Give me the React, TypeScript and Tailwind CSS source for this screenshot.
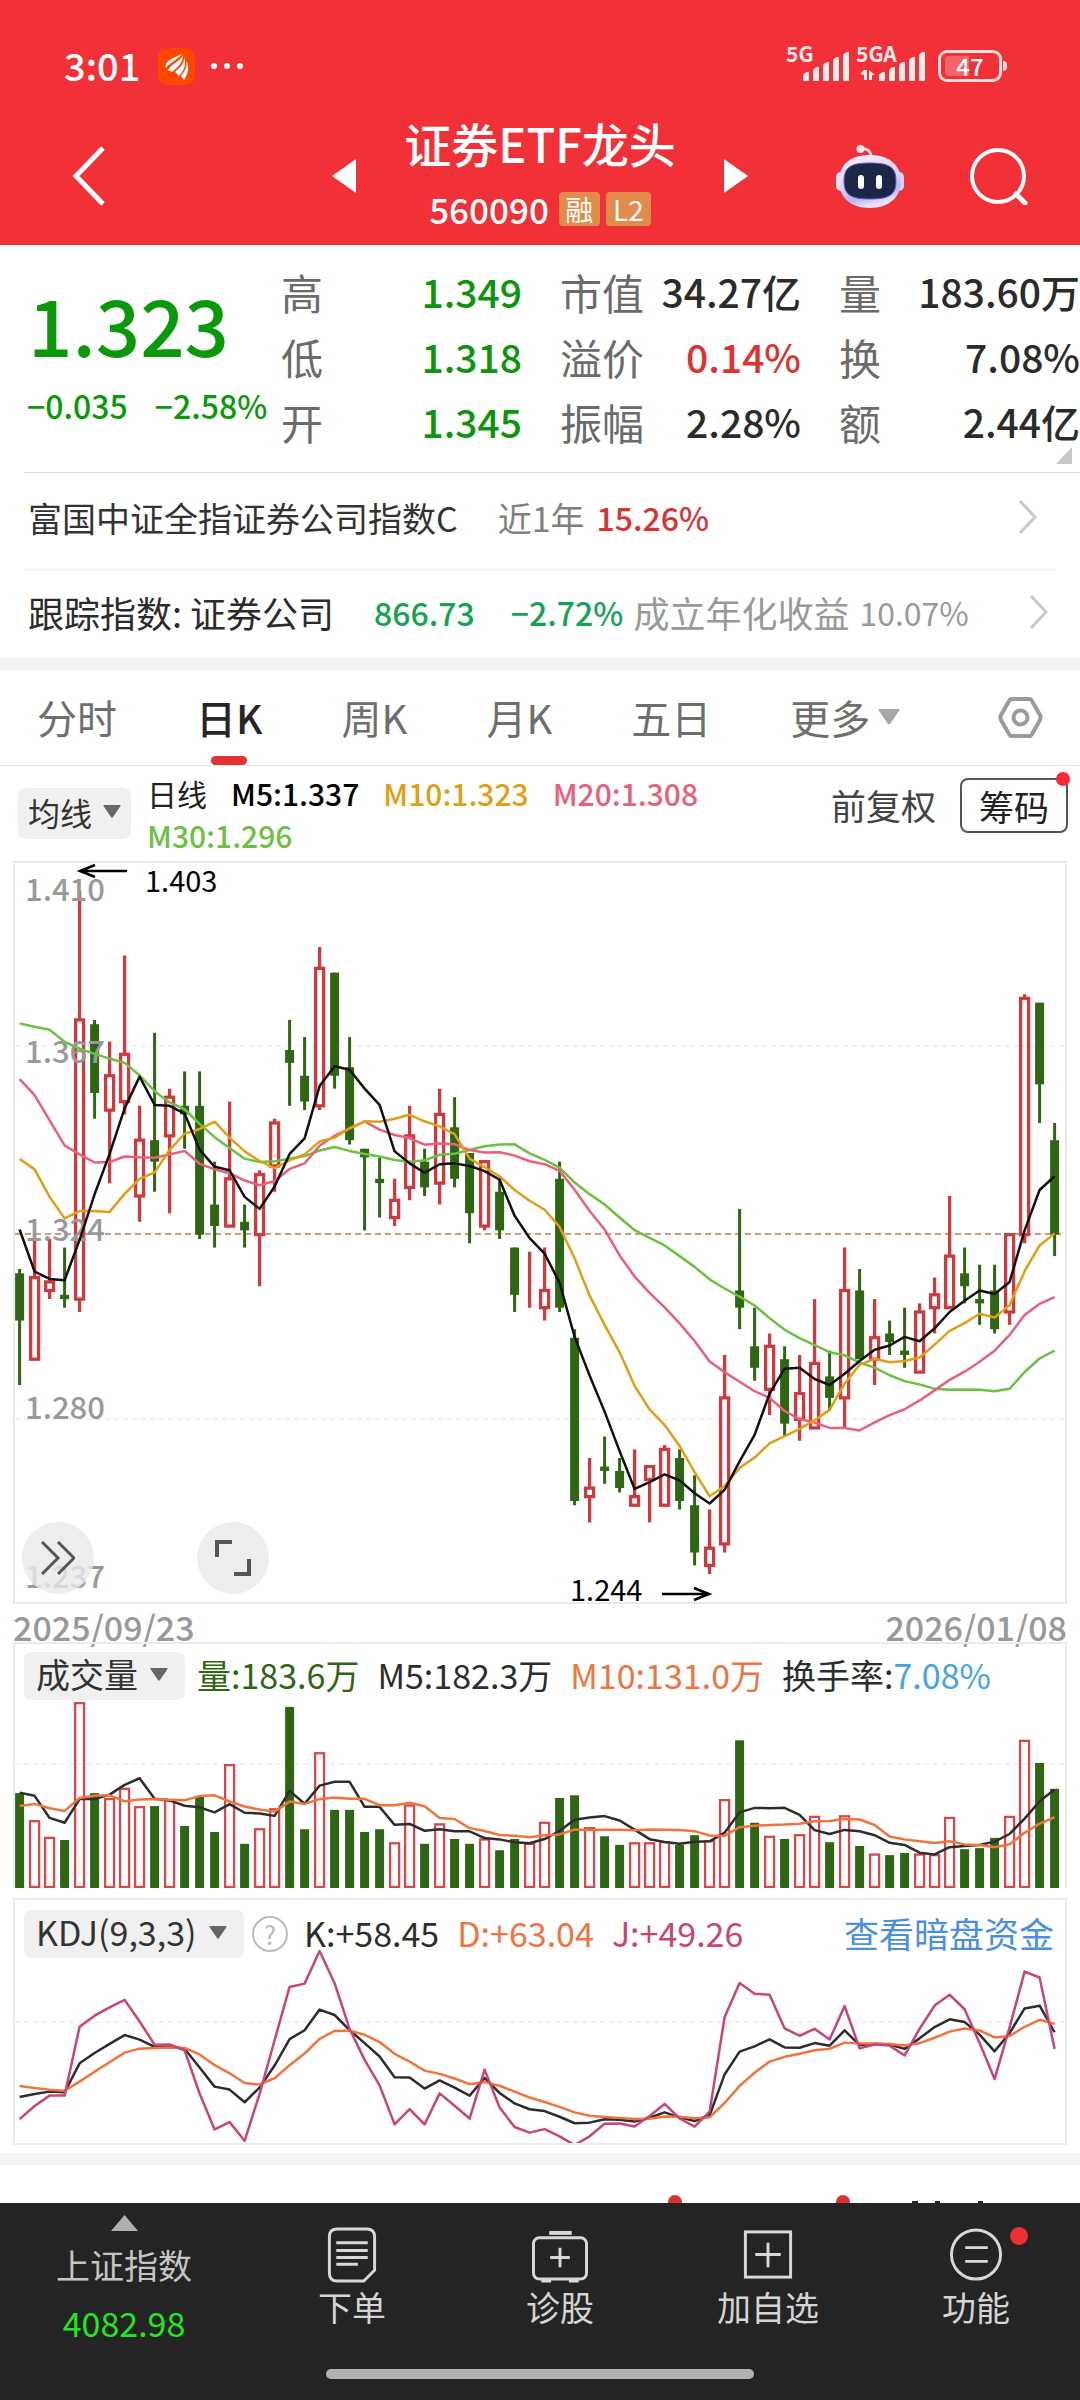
import { useState } from 'react';

// [open, close, high, low] in thousandths
const candles = [
  [1314, 1303, 1315, 1288], [1294, 1313, 1322, 1294], [1310, 1312, 1322, 1308], [1309, 1308, 1320, 1306],
  [1308, 1373, 1403, 1305], [1372, 1356, 1373, 1350], [1352, 1360, 1368, 1335], [1354, 1365, 1388, 1351],
  [1332, 1345, 1353, 1326], [1345, 1340, 1370, 1333], [1346, 1355, 1357, 1328], [1353, 1351, 1361, 1343],
  [1353, 1323, 1361, 1322], [1330, 1325, 1340, 1320], [1325, 1336, 1354, 1325], [1326, 1324, 1330, 1320],
  [1323, 1337, 1338, 1311], [1339, 1349, 1350, 1333], [1366, 1363, 1373, 1353], [1360, 1354, 1369, 1352],
  [1353, 1385, 1390, 1352], [1384, 1360, 1384, 1357], [1362, 1345, 1369, 1344], [1343, 1341, 1343, 1324],
  [1336, 1335, 1341, 1327], [1327, 1331, 1336, 1325], [1334, 1346, 1353, 1331], [1340, 1334, 1343, 1332],
  [1335, 1351, 1357, 1330], [1348, 1336, 1355, 1334], [1342, 1328, 1342, 1321], [1325, 1340, 1340, 1324],
  [1333, 1324, 1336, 1322], [1320, 1309, 1320, 1305], [1310, 1310, 1319, 1306], [1306, 1310, 1320, 1303],
  [1336, 1306, 1340, 1305], [1299, 1261, 1301, 1260], [1262, 1264, 1271, 1256], [1269, 1268, 1276, 1265],
  [1268, 1264, 1271, 1263], [1260, 1262, 1273, 1260], [1266, 1269, 1269, 1256], [1260, 1273, 1274, 1260],
  [1271, 1261, 1273, 1259], [1260, 1249, 1267, 1246], [1246, 1250, 1259, 1244], [1251, 1285, 1295, 1249],
  [1310, 1306, 1329, 1301], [1297, 1292, 1306, 1289], [1287, 1297, 1300, 1281], [1294, 1279, 1297, 1276],
  [1280, 1286, 1295, 1275], [1278, 1293, 1308, 1278], [1290, 1285, 1296, 1282], [1285, 1310, 1320, 1278],
  [1310, 1294, 1315, 1294], [1294, 1299, 1308, 1288], [1300, 1298, 1303, 1295], [1296, 1295, 1306, 1292],
  [1291, 1305, 1307, 1291], [1306, 1309, 1313, 1300], [1306, 1318, 1332, 1306], [1314, 1311, 1320, 1307],
  [1308, 1307, 1316, 1302], [1310, 1301, 1316, 1300], [1305, 1323, 1323, 1302], [1323, 1378, 1379, 1321],
  [1377, 1358, 1377, 1349], [1345, 1323, 1349, 1318],
];

const volumes = [
  176, 124, 93, 89, 343, 176, 165, 184, 150, 152, 162, 115, 169, 104, 228, 82, 109, 146, 336, 109, 250, 145, 145, 104,
  109, 83, 153, 82, 118, 91, 82, 90, 70, 91, 82, 121, 167, 172, 111, 96, 80, 83, 83, 85, 80, 98, 87, 163, 274, 121, 95,
  91, 98, 132, 85, 133, 78, 62, 61, 65, 62, 61, 130, 72, 74, 93, 132, 273, 232, 184,
];

// averages for the days before a full window is available
const lead5 = [1324.2, 1314.4, 1312.7, 1312.4];
const lead10 = [1340.6, 1338.2, 1331.8, 1326.8, 1328.5, 1328.5, 1328.3, 1332.5, 1336];
const lead20 = [
  1359.2, 1355.5, 1349.6, 1343.8, 1341.7, 1339.8, 1339.9, 1341.2, 1341, 1340.9, 1341.7, 1342.5, 1339.5, 1338.2, 1337.3,
  1335.6, 1334.5, 1335.5, 1338.3,
];
const lead30 = [
  1372.2, 1371.4, 1370.7, 1367.9, 1366.3, 1365.1, 1364, 1363, 1360.1, 1356.4, 1353.8, 1352.2, 1348.8, 1345.7, 1343.2,
  1340.7, 1339.9, 1340.1, 1340.7, 1341.3, 1342.6, 1343.4, 1342.5, 1341.8, 1341.2, 1340.4, 1340, 1340.3, 1341.6,
];
const volLead5 = [177, 171, 130, 121];
const volLead10 = [152, 156, 148, 143, 167, 171, 172, 161, 164];
const leadK = [22.7, 24.4, 25.7, 25.3, 41.3, 47, 52, 56.9, 54.4];
const leadD = [28.8, 27.7, 26.8, 26.2, 31.2, 36.7, 41.9, 47.2, 49.4];

const isUp = ([open, close]: number[], i: number) => close > open || i === 34;

const average = (values: number[], n: number, lead: number[]) =>
  values.map((_, i) => (i < lead.length ? lead[i] : values.slice(i - n + 1, i + 1).reduce((a, b) => a + b, 0) / n));

const kdj = () => {
  const k = [...leadK];
  const d = [...leadD];
  for (let i = k.length; i < candles.length; i++) {
    const win = candles.slice(i - 8, i + 1);
    const high = Math.max(...win.map((c) => c[2]));
    const low = Math.min(...win.map((c) => c[3]));
    const rsv = ((candles[i][1] - low) / (high - low)) * 100;
    k.push((k[i - 1] * 2 + rsv) / 3);
    d.push((d[i - 1] * 2 + k[i]) / 3);
  }
  return { k, d, j: k.map((v, i) => 3 * v - 2 * d[i]) };
};

const x = (i: number) => 4.6 + i * 15;
const priceY = (p: number) => (1410 - p) * 4.295 - 2;
const volY = (v: number) => 244 - v * 0.539;
const kdjY = (v: number) => 124 + (63 - v) * 1.813;

const closes = candles.map((c) => c[1]);
const { k, d, j } = kdj();

const UP = '#cd3b3f';
const DOWN = '#2f6614';

function Line({ values, y, color }: { values: number[]; y: (v: number) => number; color: string }) {
  const points = values.map((v, i) => `${x(i)},${y(v)}`).join(' ');
  return <polyline points={points} fill="none" stroke={color} strokeWidth={2.5} strokeLinejoin="round" />;
}

function GridLine({ y }: { y: number }) {
  return <line x1={0} x2={1050} y1={y} y2={y} stroke="#e4e4e4" strokeWidth={1} strokeDasharray="5 4" />;
}

function Caret({ className }: { className: string }) {
  return (
    <svg viewBox="0 0 18 13" className={className} fill="currentColor" aria-hidden="true">
      <path d="M1 0h16q1 0 .5 1L10 12q-1 1.500-2 0L.5 1Q0 0 1 0z" />
    </svg>
  );
}

function Picker({ label, value, className }: { label: string; value: string; className: string }) {
  return (
    <label className={`flex shrink-0 items-center rounded-lg bg-[#f0f0f0] text-[#333] ${className}`}>
      <select aria-label={label} className="appearance-none bg-transparent pb-1 outline-none">
        <option>{value}</option>
      </select>
      <Caret className="pointer-events-none mb-1 w-[18px] text-[#666]" />
    </label>
  );
}

function Signal({ name, active }: { name: string; active?: boolean }) {
  const start = active ? 23 : 17;
  return (
    <svg viewBox="0 0 70 60" className="h-[60px] w-[70px] overflow-visible" fill="#ffe9e9" aria-hidden="true">
      <text x={0} y={26} fontSize={21} fontWeight={700}>
        {name}
      </text>
      {[0, 1, 2, 3, 4].map((i) => (
        <path key={i} d={`M${start + i * 10} ${40 - i * 5}q0-2 2-3l2-1q2-1 2 1v${7 + i * 5}q0 1-1 1h-4q-1 0-1-1z`} />
      ))}
      {active && <path d="M8 34h3v10h-3v-5l-4-1zM13 44v-10l6 5h-3v5z" />}
    </svg>
  );
}

function StatusBar() {
  return (
    <div className="flex h-12 items-center pr-[78px] pl-16">
      <span className="pb-1 text-[38px] font-medium">3:01</span>
      <svg viewBox="0 0 37 37" className="ml-[18px] w-[37px]" aria-hidden="true">
        <rect width={37} height={37} rx={9} fill="#ff4700" />
        <g fill="#fff">
          <path d="M24 6C17 9 11 11 8 16q-1 2 0 4C11 15 18 13 24 6z" />
          <path d="M25 7C22 14 14 15 10 22l4 2C18 20 25 16 25 7z" />
          <path d="M26 9c1 7-5 11-9 15l4 4c4-4 8-11 5-19z" />
          <path d="M28 13c2 5-2 11-5 15l3 4c4-6 6-14 2-19z" />
        </g>
      </svg>
      <svg viewBox="0 0 32 6" className="ml-4 w-8" fill="#fff" aria-hidden="true">
        <circle cx={3} cy={3} r={3} />
        <circle cx={16} cy={3} r={3} />
        <circle cx={29} cy={3} r={3} />
      </svg>
      <div className="ml-auto flex items-center">
        <Signal name="5G" />
        <Signal name="5GA" active />
        <div className="relative ml-3 flex h-8 w-16 items-center justify-center rounded-[9px] border-3 border-[#ffdede] text-[24px] leading-6 font-medium">
          <span className="absolute inset-y-[3px] left-1 w-6 rounded-l bg-white/25" />
          <span className="relative">47</span>
          <span className="absolute top-2 -right-2 h-[10px] w-1 rounded-r bg-[#ffdede]" />
        </div>
      </div>
    </div>
  );
}

function Robot() {
  return (
    <svg viewBox="0 0 68 64" className="w-[68px]" aria-hidden="true">
      <defs>
        <linearGradient id="shell" x1="0" y1="0" x2="0.3" y2="1">
          <stop offset="0" stopColor="#fbf3fb" />
          <stop offset="0.55" stopColor="#dcd6f7" />
          <stop offset="0.85" stopColor="#b9b6f2" />
          <stop offset="1" stopColor="#e4e0fb" />
        </linearGradient>
      </defs>
      <path d="M25 5C31 4 35 7 35 13" fill="none" stroke="#f6d5dc" strokeWidth={3} />
      <circle cx={24.5} cy={5} r={4} fill="#fde6ea" />
      <rect x={0} y={28} width={10} height={19} rx={5} fill="#f1e8fa" />
      <rect x={58} y={28} width={10} height={19} rx={5} fill="#dcd4fa" />
      <path d="M34 11C54 11 65 22 65 37S54 64 34 64 3 53 3 37 14 11 34 11z" fill="url(#shell)" />
      <path d="M34 19C53 19 60 23 60 37S53 55 34 55 8 51 8 37 15 19 34 19z" fill="#1c2748" stroke="#6a55d8" strokeWidth={1} />
      <rect x={22} y={31} width={6} height={14} rx={3} fill="#fff" />
      <rect x={40} y={31} width={6} height={14} rx={3} fill="#fff" />
    </svg>
  );
}

function TitleBar() {
  return (
    <div className="mt-4 grid h-[139px] grid-cols-[1fr_416px_1fr] items-center">
      <div className="flex pl-[72px]">
        <button aria-label="返回">
          <svg viewBox="0 0 34 60" className="w-[34px]" fill="none" stroke="#fff" strokeWidth={5}>
            <path d="M31 2L4 30l27 28" />
          </svg>
        </button>
      </div>
      <div className="flex items-center justify-between">
        <button aria-label="上一个">
          <svg viewBox="0 0 24 34" className="w-6" fill="#fff">
            <path d="M24 0v34L0 17z" />
          </svg>
        </button>
        <div className="flex flex-col items-center pb-2">
          <h1 className="text-[47px] leading-14 font-medium">证券ETF龙头</h1>
          <div className="mt-[18px] flex items-center gap-[6px] leading-10">
            <span className="mr-1 text-[35px] font-medium">560090</span>
            <span className="w-[41px] rounded-sm bg-[#e28b4b] text-center text-[28px] leading-[34px]">融</span>
            <span className="w-[45px] rounded-sm bg-[#e28b4b] text-center text-[28px] leading-[34px]">L2</span>
          </div>
        </div>
        <button aria-label="下一个">
          <svg viewBox="0 0 24 34" className="w-6" fill="#fff">
            <path d="M0 0v34l24-17z" />
          </svg>
        </button>
      </div>
      <div className="flex items-center justify-end gap-[66px] pr-[52px]">
        <button aria-label="智能助手">
          <Robot />
        </button>
        <button aria-label="搜索">
          <svg viewBox="0 0 58 58" className="w-[58px]" fill="none" stroke="#fff" strokeWidth={4}>
            <circle cx={28} cy={29} r={26} />
            <path d="M46 47l9 9" strokeWidth={5} strokeLinecap="round" />
          </svg>
        </button>
      </div>
    </div>
  );
}

const quote = [
  { label: '高', value: '1.349', color: 'text-[#0d960d]' },
  { label: '市值', value: '34.27亿', color: 'text-[#2b2b2b]' },
  { label: '量', value: '183.60万', color: 'text-[#2b2b2b]' },
  { label: '低', value: '1.318', color: 'text-[#0d960d]' },
  { label: '溢价', value: '0.14%', color: 'text-[#dc3232]' },
  { label: '换', value: '7.08%', color: 'text-[#2b2b2b]' },
  { label: '开', value: '1.345', color: 'text-[#0d960d]' },
  { label: '振幅', value: '2.28%', color: 'text-[#2b2b2b]' },
  { label: '额', value: '2.44亿', color: 'text-[#2b2b2b]' },
];

function Quote() {
  return (
    <section className="relative flex pt-[14px] pb-[18px]">
      <div className="w-[281px] shrink-0 text-[#0a990a]">
        <p className="mt-[22px] pl-7 text-[78px] leading-[84px] font-medium">1.323</p>
        <p className="mt-5 flex gap-[27px] pl-[27px] text-[32px] leading-10 font-medium whitespace-nowrap">
          <span>−0.035</span>
          <span>−2.58%</span>
        </p>
      </div>
      <dl className="grid flex-1 grid-cols-3 gap-x-[38px]">
        {quote.map((item) => (
          <div key={item.label} className="flex h-[65px] items-center justify-between whitespace-nowrap">
            <dt className="text-[42px] text-[#6b6b6b]">{item.label}</dt>
            <dd className={`text-[39px] font-medium ${item.color}`}>{item.value}</dd>
          </div>
        ))}
      </dl>
      <svg viewBox="0 0 16 17" className="absolute right-2 bottom-2 w-4" fill="#c8c8c8" aria-hidden="true">
        <path d="M16 0v17H0z" />
      </svg>
    </section>
  );
}

function Chevron() {
  return (
    <svg viewBox="0 0 20 34" className="w-5" fill="none" stroke="#c9c9c9" strokeWidth={3} aria-hidden="true">
      <path d="M2 1l15 16L2 33" />
    </svg>
  );
}

function IndexRows() {
  return (
    <section className="whitespace-nowrap">
      <div className="ml-6 border-t border-[#d9d9d9]" />
      <a href="#fund" className="mx-6 flex h-[97px] items-center border-b border-[#ebebeb] pr-[18px] pb-2 pl-1 text-[34px]">
        <span className="text-[#333]">富国中证全指证券公司指数C</span>
        <span className="ml-10 text-[#808080]">近1年</span>
        <span className="mr-auto ml-3 text-[32px] font-medium text-[#d83434]">15.26%</span>
        <Chevron />
      </a>
      <a href="#index" className="flex h-[88px] items-center pr-[31px] pb-1 pl-7 text-[36px]">
        <span className="text-[#2b2b2b]">跟踪指数: 证券公司</span>
        <span className="ml-10 text-[32px] font-medium text-[#16a353]">866.73</span>
        <span className="ml-9 text-[32px] font-medium text-[#16a353]">−2.72%</span>
        <span className="ml-[10px] text-[#999]">成立年化收益</span>
        <span className="mr-auto ml-[10px] text-[32px] text-[#999]">10.07%</span>
        <Chevron />
      </a>
    </section>
  );
}

const tabs = ['分时', '日K', '周K', '月K', '五日', '更多'];

function Tabs() {
  const [active, setActive] = useState('日K');
  return (
    <nav className="flex h-24 items-center gap-[79px] border-b border-[#e2e2e2] px-[37px] text-[40px] whitespace-nowrap">
      {tabs.map((tab) => (
        <button
          key={tab}
          onClick={() => setActive(tab)}
          className={`relative flex h-full items-center pb-[2px] ${active === tab ? 'font-medium text-[#262626]' : 'text-[#6e6e6e]'}`}
        >
          {tab}
          {tab === '更多' && <Caret className="ml-2 w-[22px] text-[#a6a6a6]" />}
          {active === tab && (
            <span className="absolute bottom-0 left-1/2 h-[9px] w-9 -translate-x-1/2 rounded-full bg-[#e23232]" />
          )}
        </button>
      ))}
      <button aria-label="设置" className="ml-auto">
        <svg viewBox="0 0 45 43" className="w-[45px]" fill="none" stroke="#9a9a9a" strokeWidth={4} strokeLinejoin="round">
          <path d="M14 3h17q2 0 3 2l8 14q1 2.500 0 5l-8 14q-1 2-3 2H14q-2 0-3-2L3 24q-1-2.500 0-5l8-14q1-2 3-2z" />
          <circle cx={22.5} cy={21.5} r={7} />
        </svg>
      </button>
    </nav>
  );
}

function Toolbar() {
  return (
    <div className="flex h-[95px] items-center">
      <Picker label="主图指标" value="均线" className="ml-[18px] h-[51px] gap-[10px] px-[10px] text-[32px]" />
      <div className="ml-4 flex flex-1 flex-wrap gap-x-6 text-[30px] leading-[42px] font-medium">
        <span className="font-normal text-[#222]">日线</span>
        <span className="text-black">M5:1.337</span>
        <span className="text-[#e09f14]">M10:1.323</span>
        <span className="text-[#ea5f7b]">M20:1.308</span>
        <span className="text-[#6cc043]">M30:1.296</span>
      </div>
      <button className="mb-4 text-[35px] text-[#444]">前复权</button>
      <button className="relative mr-3 mb-4 ml-6 h-[55px] w-[108px] rounded-lg border-2 border-[#555] text-[35px] leading-[49px] text-[#222]">
        筹码
        <span className="absolute -top-2 -right-1 size-[14px] rounded-full bg-[#fb2637]" />
      </button>
    </div>
  );
}

const axisLabels = [
  { text: '1.410', y: 38 },
  { text: '1.367', y: 200 },
  { text: '1.324', y: 378 },
  { text: '1.280', y: 556 },
  { text: '1.237', y: 725 },
];

function PriceChart() {
  return (
    <div className="mx-[13px] grid border-2 border-[#e9e9e9]">
      <svg
        viewBox="0 0 1050 739"
        className="col-start-1 row-start-1 w-full overflow-visible"
        role="img"
        aria-label="日K线图"
      >
        <GridLine y={183} />
        <GridLine y={370} />
        <GridLine y={556} />
        <line x1={0} x2={1050} y1={371} y2={371} stroke="#c3a284" strokeWidth={2} strokeDasharray="6 4" />
        {candles.map((c, i) => {
          const [open, close, high, low] = c;
          const top = priceY(Math.max(open, close));
          const bottom = priceY(Math.min(open, close));
          return isUp(c, i) ? (
            <g key={i} stroke={UP} strokeWidth={3.3} fill="none">
              <path d={`M${x(i)} ${priceY(high)}V${top}M${x(i)} ${bottom}V${priceY(low)}`} />
              <rect x={x(i) - 4} y={top} width={8} height={bottom - top} />
            </g>
          ) : (
            <g key={i} fill={DOWN}>
              <rect x={x(i) - 1.5} y={priceY(high)} width={3} height={priceY(low) - priceY(high)} />
              <rect x={x(i) - 4.5} y={top} width={9} height={Math.max(bottom - top, 3)} />
            </g>
          );
        })}
        <g fill="#999" fontSize={31} fontWeight={500}>
          {axisLabels.map((label) => (
            <text key={label.text} x={10} y={label.y}>
              {label.text}
            </text>
          ))}
        </g>
        <Line values={average(closes, 30, lead30)} y={priceY} color="#6cc043" />
        <Line values={average(closes, 20, lead20)} y={priceY} color="#ea5f7b" />
        <Line values={average(closes, 10, lead10)} y={priceY} color="#e09f14" />
        <Line values={average(closes, 5, lead5)} y={priceY} color="#111" />
        <g fontSize={29}>
          <text x={130} y={29}>
            1.403
          </text>
          <text x={555} y={738}>
            1.244
          </text>
        </g>
        <g fill="none" stroke="#000" strokeWidth={2.5}>
          <path d="M112 8H65M80 2L65 8l15 6" />
          <path d="M647 731h47M679 725l15 6-15 6" />
        </g>
      </svg>
      <div className="z-10 col-start-1 row-start-1 flex gap-[103px] self-end pb-2 pl-[7px]">
        <button aria-label="展开" className="flex size-[72px] items-center justify-center rounded-full bg-[#e8e8e8]/80">
          <svg viewBox="0 0 34 34" className="w-[34px]" fill="none" stroke="#555" strokeWidth={3}>
            <path d="M1 1l16 16L1 33M17 1l16 16-16 16" />
          </svg>
        </button>
        <button aria-label="全屏" className="flex size-[72px] items-center justify-center rounded-full bg-[#e8e8e8]/80">
          <svg viewBox="0 0 38 38" className="w-[38px]" fill="none" stroke="#555" strokeWidth={4}>
            <path d="M3 18V3h15M35 20v15H20" />
          </svg>
        </button>
      </div>
    </div>
  );
}

function VolumeChart() {
  return (
    <div className="mx-[13px] grid border-2 border-b-0 border-[#ebebeb]">
      <svg viewBox="0 0 1050 244" className="col-start-1 row-start-1 w-full" role="img" aria-label="成交量">
        <GridLine y={120} />
        {volumes.map((v, i) =>
          isUp(candles[i], i) ? (
            <rect key={i} x={x(i) - 4.5} y={volY(v)} width={9} height={243 - volY(v)} fill="none" stroke="#d4494e" strokeWidth={2.3} />
          ) : (
            <rect key={i} x={x(i) - 4.5} y={volY(v)} width={9} height={244 - volY(v)} fill={DOWN} />
          ),
        )}
        <Line values={average(volumes, 5, volLead5)} y={volY} color="#2d2d2d" />
        <Line values={average(volumes, 10, volLead10)} y={volY} color="#f0743e" />
      </svg>
      <div className="z-10 col-start-1 row-start-1 flex items-center gap-3 self-start pt-2 pl-[9px] text-[34px] leading-10 whitespace-nowrap">
        <Picker label="副图指标一" value="成交量" className="h-12 w-[161px] gap-3 pl-3" />
        <div className="flex gap-[18px] pb-[2px]">
          <span className="text-[#2f6614]">量:183.6万</span>
          <span className="text-[#2d2d2d]">M5:182.3万</span>
          <span className="text-[#ee7441]">M10:131.0万</span>
          <span className="text-[#2d2d2d]">
            换手率:<span className="text-[#45a5e0]">7.08%</span>
          </span>
        </div>
      </div>
    </div>
  );
}

function KdjChart() {
  return (
    <div className="mx-[13px] mt-[10px] grid border-2 border-[#ebebeb]">
      <svg viewBox="0 0 1050 243" className="col-start-1 row-start-1 w-full" role="img" aria-label="KDJ">
        <GridLine y={122} />
        <Line values={k} y={kdjY} color="#2d2d2d" />
        <Line values={d} y={kdjY} color="#f0743e" />
        <Line values={j} y={kdjY} color="#c9447a" />
      </svg>
      <div className="col-start-1 row-start-1 flex items-center self-start pt-[10px] pr-[11px] pl-[9px] text-[34px] leading-10 whitespace-nowrap">
        <Picker label="副图指标二" value="KDJ(9,3,3)" className="h-12 w-[220px] gap-3 pl-3" />
        <button aria-label="指标说明" className="ml-2 size-9 rounded-full border-2 border-[#bbb] text-[26px] leading-8 text-[#bbb]">
          ?
        </button>
        <div className="ml-4 flex flex-1 gap-[18px] pb-[2px]">
          <span className="text-[#2d2d2d]">K:+58.45</span>
          <span className="text-[#ee7441]">D:+63.04</span>
          <span className="text-[#c9447a]">J:+49.26</span>
          <a href="#funds" className="ml-auto text-[35px] text-[#4a90dc]">
            查看暗盘资金
          </a>
        </div>
      </div>
    </div>
  );
}

const actions = [
  {
    label: '下单',
    icon: (
      <>
        <path d="M10 2h30q8 0 8 8v34L37 55H10q-8 0-8-8V10q0-8 8-8z" />
        <path d="M9 16h32M9 24h32M9 31h32M9 38h22" />
      </>
    ),
  },
  {
    label: '诊股',
    icon: (
      <>
        <path d="M14 6h23" strokeWidth={4} />
        <rect x={-2} y={11} width={54} height={42} rx={6} />
        <path d="M25 21v20M15 31h20M6 55h10M34 55h10" />
      </>
    ),
  },
  {
    label: '加自选',
    icon: (
      <>
        <rect x={2} y={5} width={46} height={46} />
        <path d="M25 16v25M12 28h26" />
      </>
    ),
  },
  {
    label: '功能',
    badge: true,
    icon: (
      <>
        <circle cx={25} cy={28} r={25} />
        <path d="M14 21h23M14 35h23" />
      </>
    ),
  },
];

function BottomBar() {
  return (
    <footer className="bg-[#242424] text-[34px] text-[#d4d4d4]">
      <nav className="grid h-[150px] grid-cols-[248fr_208fr_208fr_208fr_208fr] leading-10">
        <button className="flex flex-col items-center pt-3">
          <svg viewBox="0 0 27 16" className="h-4" fill="#b0b0b0" aria-hidden="true">
            <path d="M13.500 0L27 16H0z" />
          </svg>
          <span className="mt-[14px] text-[#c4c4c4]">上证指数</span>
          <span className="mt-[18px] text-[#22e622]">4082.98</span>
        </button>
        {actions.map((action) => (
          <button key={action.label} className="relative flex flex-col items-center pt-6">
            <svg
              viewBox="-4 0 58 57"
              className="h-14 w-[58px]"
              fill="none"
              stroke="#d8d8d8"
              strokeWidth={3}
              aria-hidden="true"
            >
              {action.icon}
            </svg>
            {action.badge && <span className="absolute top-6 left-[138px] size-[18px] rounded-full bg-[#ec2f2f]" />}
            <span className="mt-1">{action.label}</span>
          </button>
        ))}
      </nav>
      <div className="mx-auto mt-4 h-[10px] w-[428px] rounded-full bg-[#b2b2b2]" />
      <div className="h-[21px]" />
    </footer>
  );
}

export default function App() {
  return (
    <div className="flex min-h-screen flex-col bg-white font-['Noto_Sans_CJK_SC','Liberation_Sans',sans-serif]">
      <header className="bg-[#f13037] pt-[42px] text-white">
        <StatusBar />
        <TitleBar />
      </header>
      <Quote />
      <IndexRows />
      <div className="h-3 bg-[#f3f3f3]" />
      <Tabs />
      <Toolbar />
      <PriceChart />
      <div className="mx-[13px] flex h-[38px] justify-between text-[34px] leading-[46px] font-medium text-[#999]">
        <time>2025/09/23</time>
        <time>2026/01/08</time>
      </div>
      <VolumeChart />
      <KdjChart />
      <div className="mt-2 h-3 bg-[#f4f4f4]" />
      <div className="flex flex-1 items-end justify-end overflow-hidden pr-[96px]">
        <svg viewBox="0 0 320 9" className="w-[320px]" aria-hidden="true">
          <g fill="#dc3232">
            <circle cx={11} cy={8} r={7} />
            <circle cx={179} cy={8} r={7} />
          </g>
          <path d="M248 8h6M271 8h5M314 8h5" stroke="#222" strokeWidth={2} />
        </svg>
      </div>
      <BottomBar />
    </div>
  );
}
